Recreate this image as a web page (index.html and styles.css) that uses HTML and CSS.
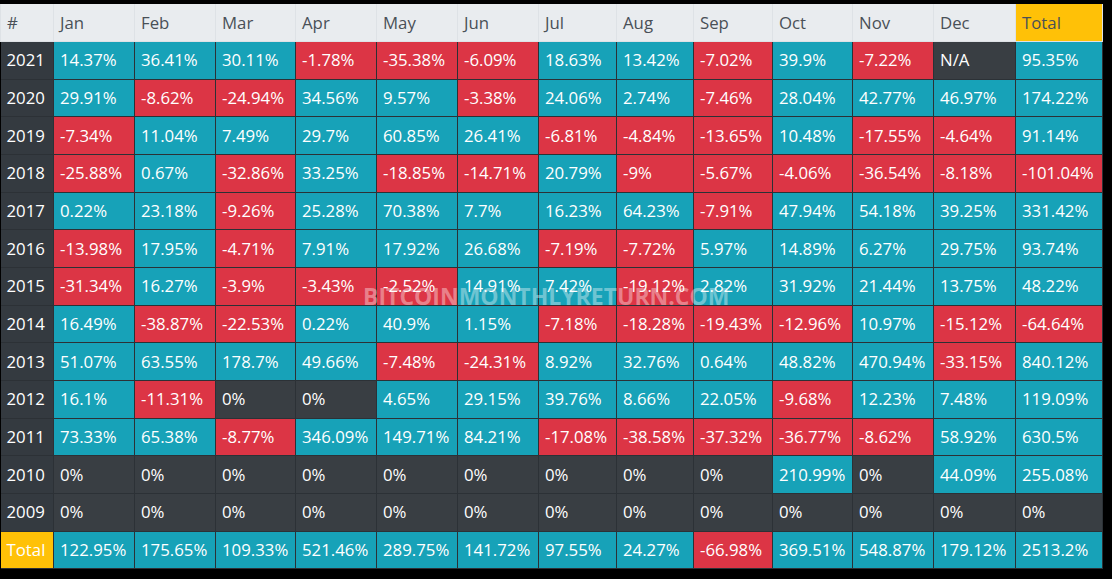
FILE: index.html
```html
<!DOCTYPE html>
<html>
<head>
<meta charset="utf-8">
<link rel="stylesheet" href="styles.css">
</head>
<body>
<div class="wrap">
<table class="returns">
<colgroup>
<col class="c-year"><col class="c81"><col class="c81"><col class="c80"><col class="c81"><col class="c81"><col class="c81"><col class="c78"><col class="c77"><col class="c79"><col class="c80"><col class="c81"><col class="c82"><col class="c87">
</colgroup>
<thead>
<tr><th>#</th><th>Jan</th><th>Feb</th><th>Mar</th><th>Apr</th><th>May</th><th>Jun</th><th>Jul</th><th>Aug</th><th>Sep</th><th>Oct</th><th>Nov</th><th>Dec</th><th class="tot">Total</th></tr>
</thead>
<tbody>
<tr><td class="y">2021</td><td class="p">14.37%</td><td class="p">36.41%</td><td class="p">30.11%</td><td class="n">-1.78%</td><td class="n">-35.38%</td><td class="n">-6.09%</td><td class="p">18.63%</td><td class="p">13.42%</td><td class="n">-7.02%</td><td class="p">39.9%</td><td class="n">-7.22%</td><td class="z">N/A</td><td class="p">95.35%</td></tr>
<tr><td class="y">2020</td><td class="p">29.91%</td><td class="n">-8.62%</td><td class="n">-24.94%</td><td class="p">34.56%</td><td class="p">9.57%</td><td class="n">-3.38%</td><td class="p">24.06%</td><td class="p">2.74%</td><td class="n">-7.46%</td><td class="p">28.04%</td><td class="p">42.77%</td><td class="p">46.97%</td><td class="p">174.22%</td></tr>
<tr><td class="y">2019</td><td class="n">-7.34%</td><td class="p">11.04%</td><td class="p">7.49%</td><td class="p">29.7%</td><td class="p">60.85%</td><td class="p">26.41%</td><td class="n">-6.81%</td><td class="n">-4.84%</td><td class="n">-13.65%</td><td class="p">10.48%</td><td class="n">-17.55%</td><td class="n">-4.64%</td><td class="p">91.14%</td></tr>
<tr><td class="y">2018</td><td class="n">-25.88%</td><td class="p">0.67%</td><td class="n">-32.86%</td><td class="p">33.25%</td><td class="n">-18.85%</td><td class="n">-14.71%</td><td class="p">20.79%</td><td class="n">-9%</td><td class="n">-5.67%</td><td class="n">-4.06%</td><td class="n">-36.54%</td><td class="n">-8.18%</td><td class="n">-101.04%</td></tr>
<tr><td class="y">2017</td><td class="p">0.22%</td><td class="p">23.18%</td><td class="n">-9.26%</td><td class="p">25.28%</td><td class="p">70.38%</td><td class="p">7.7%</td><td class="p">16.23%</td><td class="p">64.23%</td><td class="n">-7.91%</td><td class="p">47.94%</td><td class="p">54.18%</td><td class="p">39.25%</td><td class="p">331.42%</td></tr>
<tr><td class="y">2016</td><td class="n">-13.98%</td><td class="p">17.95%</td><td class="n">-4.71%</td><td class="p">7.91%</td><td class="p">17.92%</td><td class="p">26.68%</td><td class="n">-7.19%</td><td class="n">-7.72%</td><td class="p">5.97%</td><td class="p">14.89%</td><td class="p">6.27%</td><td class="p">29.75%</td><td class="p">93.74%</td></tr>
<tr><td class="y">2015</td><td class="n">-31.34%</td><td class="p">16.27%</td><td class="n">-3.9%</td><td class="n">-3.43%</td><td class="n">-2.52%</td><td class="p">14.91%</td><td class="p">7.42%</td><td class="n">-19.12%</td><td class="p">2.82%</td><td class="p">31.92%</td><td class="p">21.44%</td><td class="p">13.75%</td><td class="p">48.22%</td></tr>
<tr><td class="y">2014</td><td class="p">16.49%</td><td class="n">-38.87%</td><td class="n">-22.53%</td><td class="p">0.22%</td><td class="p">40.9%</td><td class="p">1.15%</td><td class="n">-7.18%</td><td class="n">-18.28%</td><td class="n">-19.43%</td><td class="n">-12.96%</td><td class="p">10.97%</td><td class="n">-15.12%</td><td class="n">-64.64%</td></tr>
<tr><td class="y">2013</td><td class="p">51.07%</td><td class="p">63.55%</td><td class="p">178.7%</td><td class="p">49.66%</td><td class="n">-7.48%</td><td class="n">-24.31%</td><td class="p">8.92%</td><td class="p">32.76%</td><td class="p">0.64%</td><td class="p">48.82%</td><td class="p">470.94%</td><td class="n">-33.15%</td><td class="p">840.12%</td></tr>
<tr><td class="y">2012</td><td class="p">16.1%</td><td class="n">-11.31%</td><td class="z">0%</td><td class="z">0%</td><td class="p">4.65%</td><td class="p">29.15%</td><td class="p">39.76%</td><td class="p">8.66%</td><td class="p">22.05%</td><td class="n">-9.68%</td><td class="p">12.23%</td><td class="p">7.48%</td><td class="p">119.09%</td></tr>
<tr><td class="y">2011</td><td class="p">73.33%</td><td class="p">65.38%</td><td class="n">-8.77%</td><td class="p">346.09%</td><td class="p">149.71%</td><td class="p">84.21%</td><td class="n">-17.08%</td><td class="n">-38.58%</td><td class="n">-37.32%</td><td class="n">-36.77%</td><td class="n">-8.62%</td><td class="p">58.92%</td><td class="p">630.5%</td></tr>
<tr><td class="y">2010</td><td class="z">0%</td><td class="z">0%</td><td class="z">0%</td><td class="z">0%</td><td class="z">0%</td><td class="z">0%</td><td class="z">0%</td><td class="z">0%</td><td class="z">0%</td><td class="p">210.99%</td><td class="z">0%</td><td class="p">44.09%</td><td class="p">255.08%</td></tr>
<tr><td class="y">2009</td><td class="z">0%</td><td class="z">0%</td><td class="z">0%</td><td class="z">0%</td><td class="z">0%</td><td class="z">0%</td><td class="z">0%</td><td class="z">0%</td><td class="z">0%</td><td class="z">0%</td><td class="z">0%</td><td class="z">0%</td><td class="z">0%</td></tr>
<tr><td class="ty">Total</td><td class="p">122.95%</td><td class="p">175.65%</td><td class="p">109.33%</td><td class="p">521.46%</td><td class="p">289.75%</td><td class="p">141.72%</td><td class="p">97.55%</td><td class="p">24.27%</td><td class="n">-66.98%</td><td class="p">369.51%</td><td class="p">548.87%</td><td class="p">179.12%</td><td class="p">2513.2%</td></tr>
</tbody>
</table>
<div class="watermark">BITCOINMONTHLYRETURN.COM</div>
</div>
</body>
</html>
```
FILE: styles.css
```css
html, body {
  margin: 0;
  padding: 0;
  background: #000;
}
body {
  padding-top: 4px;
  font-family: "Open Sans", "Noto Sans", sans-serif;
}
.wrap {
  position: relative;
  width: 1102px;
}
.returns {
  width: 1102px;
  table-layout: fixed;
  border-collapse: collapse;
  font-size: 16.8px;
}
.c-year { width: 53px; }
.c77 { width: 77px; }
.c78 { width: 78px; }
.c79 { width: 79px; }
.c80 { width: 80px; }
.c81 { width: 81px; }
.c82 { width: 82px; }
.c87 { width: 87px; }
.returns tr { height: 37.67px; }
.returns th, .returns td {
  padding: 0 0 0 6px;
  text-align: left;
  vertical-align: middle;
  white-space: nowrap;
  line-height: 24px;
  border: 1px solid #2c3136;
}
.returns th {
  background: #e9ecef;
  color: #495057;
  font-weight: 400;
  border-color: #dee2e6;
  border-top: 0;
}
.returns th.tot {
  background: #ffc107;
}
.returns td {
  color: #fff;
}
.returns td.y { background: #343a40; }
.returns td.p { background: #17a2b8; }
.returns td.n { background: #dc3545; }
.returns td.z { background: #393e43; }
.returns td.ty { background: #ffc107; }
.returns td.y, .returns td.ty { border-left: 0; }
.watermark {
  position: absolute;
  left: 363px;
  top: 279px;
  width: 362px;
  font-size: 23px;
  line-height: 26px;
  font-weight: 700;
  letter-spacing: 0;
  color: rgba(255, 255, 255, 0.38);
  white-space: nowrap;
  pointer-events: none;
}
```
